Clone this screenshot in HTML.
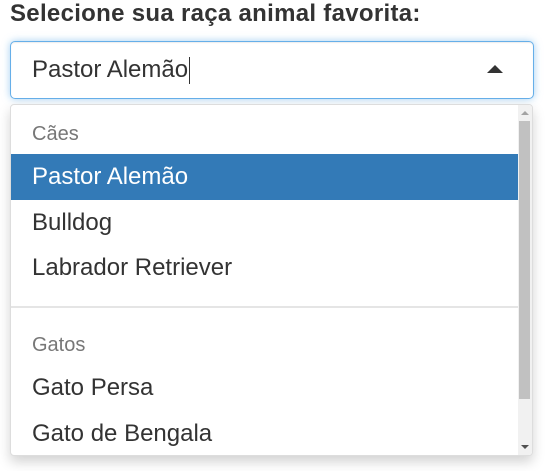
<!DOCTYPE html>
<html><head><meta charset="utf-8"><style>
body{margin:0;background:#fff;font-family:"Liberation Sans",sans-serif;color:#333;width:547px;height:471px;overflow:hidden;position:relative}
.lbl{position:absolute;left:10px;top:0px;font-weight:bold;font-size:24px;line-height:28px;letter-spacing:0.3px}
.inp{position:absolute;left:10px;top:41px;width:501px;height:56px;border:1px solid #66afe9;border-radius:5px;box-shadow:inset 0 1px 1px rgba(0,0,0,.075),0 0 8px rgba(102,175,233,.6);font-size:24px;line-height:56px;padding-left:21px;box-sizing:content-box}
.inp .c{display:inline-block;width:1px;height:27px;background:#333;vertical-align:middle;margin-left:1px}
.arr{position:absolute;left:487px;top:65px;width:0;height:0;border-left:8px solid transparent;border-right:8px solid transparent;border-bottom:8px solid #333}
.dd{position:absolute;left:10px;top:104px;width:521px;height:350px;border:1px solid #ddd;border-radius:4px;box-shadow:0 6px 12px rgba(0,0,0,.175);background:#fff;overflow:hidden}
.it{position:absolute;left:0;width:508px;height:46px;line-height:46px;padding-left:21px;font-size:24px;box-sizing:border-box}
.hd{color:#777;font-size:20px}
.sel{background:#337ab7;color:#fff}
.sb{position:absolute;right:0;top:0;width:14px;height:350px;background:#f1f1f1}
.th{position:absolute;left:1px;top:16px;width:11px;height:278px;background:#c1c1c1}
.div{position:absolute;left:0;top:201px;width:508px;height:2px;background:#e5e5e5}
</style></head><body>
<div class="lbl">Selecione sua raça animal favorita:</div>
<div class="inp">Pastor Alemão<span class="c"></span></div>
<div class="arr"></div>
<div class="dd">
<div class="it hd" style="top:6px">Cães</div>
<div class="it sel" style="top:49px">Pastor Alemão</div>
<div class="it" style="top:95px">Bulldog</div>
<div class="it" style="top:140px">Labrador Retriever</div>
<div class="div"></div>
<div class="it hd" style="top:217px">Gatos</div>
<div class="it" style="top:260px">Gato Persa</div>
<div class="it" style="top:306px">Gato de Bengala</div>
<div class="sb"><div class="th"></div>
<div style="position:absolute;left:3px;top:6px;border-left:4px solid transparent;border-right:4px solid transparent;border-bottom:4px solid #a3a3a3"></div>
<div style="position:absolute;left:3px;top:340px;border-left:4px solid transparent;border-right:4px solid transparent;border-top:4px solid #505050"></div>
</div>
</div>
</body></html>
